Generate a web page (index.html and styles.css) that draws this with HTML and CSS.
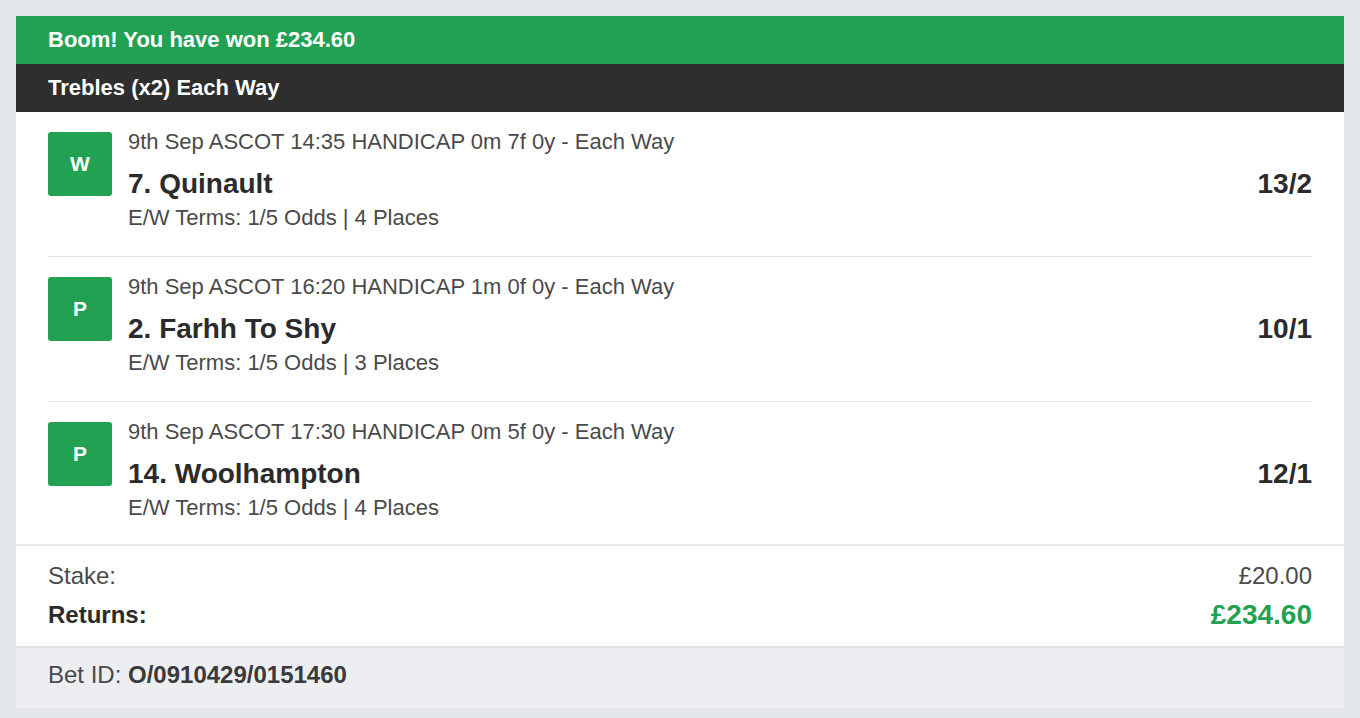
FILE: index.html
```html
<!DOCTYPE html>
<html lang="en">
<head>
  <meta charset="UTF-8" />
  <title>Bet Receipt</title>
  <meta name="viewport" content="width=device-width, initial-scale=1.0">
  <link rel="stylesheet" href="styles.css">
</head>
<body>
  <div class="bet-card">
    <div class="win-banner">Boom! You have won £234.60</div>
    <div class="bet-type">Trebles (x2) Each Way</div>

    <div class="legs">
      <div class="leg">
        <div class="result-badge">W</div>
        <div class="leg-info">
          <div class="leg-meta">9th Sep ASCOT 14:35 HANDICAP 0m 7f 0y - Each Way</div>
          <div class="leg-row">
            <span class="leg-name">7. Quinault</span>
            <span class="leg-odds">13/2</span>
          </div>
          <div class="leg-terms">E/W Terms: 1/5 Odds | 4 Places</div>
        </div>
      </div>
      <div class="leg">
        <div class="result-badge">P</div>
        <div class="leg-info">
          <div class="leg-meta">9th Sep ASCOT 16:20 HANDICAP 1m 0f 0y - Each Way</div>
          <div class="leg-row">
            <span class="leg-name">2. Farhh To Shy</span>
            <span class="leg-odds">10/1</span>
          </div>
          <div class="leg-terms">E/W Terms: 1/5 Odds | 3 Places</div>
        </div>
      </div>
      <div class="leg">
        <div class="result-badge">P</div>
        <div class="leg-info">
          <div class="leg-meta">9th Sep ASCOT 17:30 HANDICAP 0m 5f 0y - Each Way</div>
          <div class="leg-row">
            <span class="leg-name">14. Woolhampton</span>
            <span class="leg-odds">12/1</span>
          </div>
          <div class="leg-terms">E/W Terms: 1/5 Odds | 4 Places</div>
        </div>
      </div>
    </div>

    <div class="summary">
      <div class="summary-row">
        <span>Stake:</span>
        <span>£20.00</span>
      </div>
      <div class="summary-row returns">
        <span>Returns:</span>
        <span class="returns-value">£234.60</span>
      </div>
    </div>

    <div class="bet-footer">Bet ID: <strong>O/0910429/0151460</strong></div>
  </div>
</body>
</html>
```
FILE: styles.css
```css
body {
  margin: 0;
  padding: 16px;
  font-family: 'Liberation Sans', Arial, sans-serif;
  background: #e3e6e9;
  color: #333;
}
.bet-card {
  background: #fff;
}
.win-banner, .bet-type {
  height: 48px;
  padding: 0 32px;
  display: flex;
  align-items: center;
  font-size: 22px;
  font-weight: bold;
  color: #fff;
}
.win-banner {
  background: #22a153;
}
.bet-type {
  background: #2e2e2e;
}
.legs {
  padding: 0 32px;
}
.leg {
  display: flex;
  gap: 16px;
  padding: 17px 0 25px;
  border-bottom: 1px solid #e3e5e8;
}
.leg:last-child {
  padding-bottom: 23px;
  border-bottom: none;
}
.result-badge {
  flex: none;
  width: 64px;
  height: 64px;
  margin-top: 3px;
  border-radius: 3px;
  background: #22a153;
  color: #fff;
  font-size: 21px;
  font-weight: bold;
  display: flex;
  align-items: center;
  justify-content: center;
}
.leg-info {
  flex: 1;
}
.leg-meta, .leg-terms {
  font-size: 22px;
  line-height: 26px;
  color: #4a4a4a;
}
.leg-row {
  display: flex;
  justify-content: space-between;
  margin-top: 13px;
  font-size: 28px;
  line-height: 32px;
  font-weight: bold;
  color: #2b2b2b;
}
.leg-terms {
  margin-top: 5px;
}
.summary {
  border-top: 2px solid #e6e8eb;
  padding: 16px 32px 15px;
}
.summary-row {
  display: flex;
  justify-content: space-between;
  align-items: center;
  font-size: 24px;
  line-height: 28px;
  color: #4a4a4a;
}
.summary-row.returns {
  margin-top: 9px;
  line-height: 32px;
  font-weight: bold;
  color: #2b2b2b;
}
.returns-value {
  font-size: 28px;
  color: #22a153;
}
.bet-footer {
  border-top: 2px solid #e0e2e5;
  background: #eceef1;
  padding: 13px 32px 19px;
  font-size: 24px;
  line-height: 28px;
  color: #4a4a4a;
}
.bet-footer strong {
  color: #3a3a3a;
}
```
